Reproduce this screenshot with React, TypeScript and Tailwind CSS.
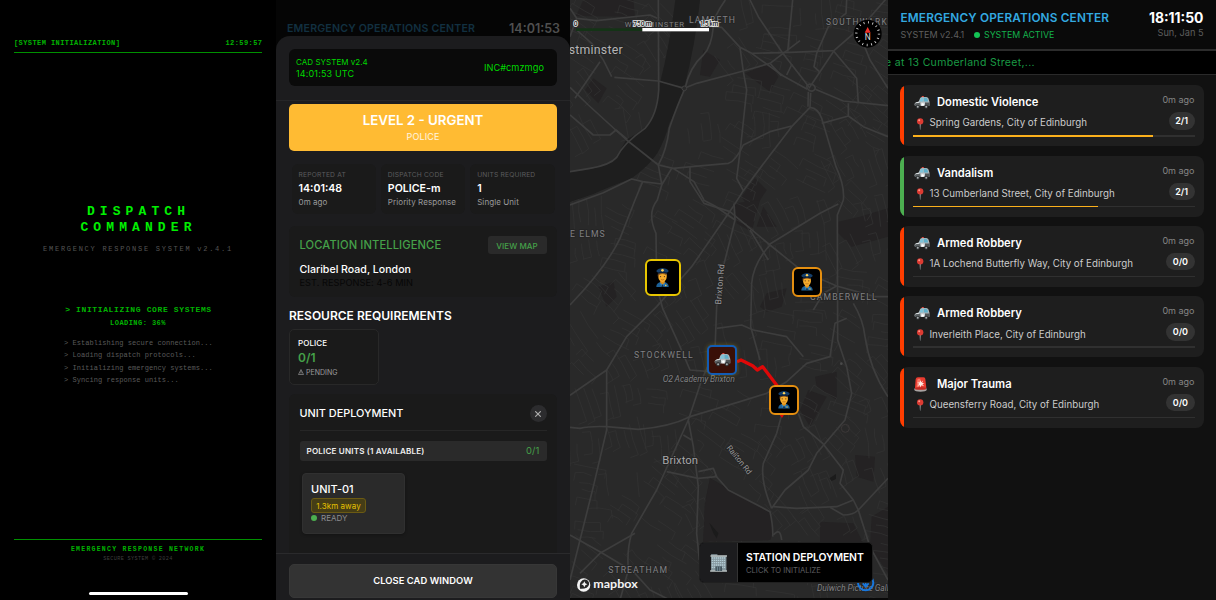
import React from "react";

const INTER = "font-['Inter',sans-serif]";
const MONO = "font-['Liberation_Mono','Courier_New',monospace]";

function PoliceCar({ className }: { className: string }) {
  return (
    <svg viewBox="0 0 48 40" className={className}>
      <rect x="23" y="0" width="7" height="4" rx="2" fill="#e0483e" />
      <path d="M14 17 L18 7 Q20 3 25 3 H37 Q42 3 44 8 L47 18 V30 H3 Q0 27 1 24 Q2 20 14 17Z" fill="#aeb6ba" />
      <path d="M16 17 L20 8 Q21 6 25 5 H28 V17Z" fill="#7fc4da" />
      <path d="M30 5 H36 Q40 6 41 10 L43 17 H30Z" fill="#5fb0ca" />
      <path d="M1 24 Q8 20 20 20 L20 31 H3 Q0 29 1 24Z" fill="#5c6163" />
      <path d="M33 20 H47 V31 H33Z" fill="#505456" />
      <path d="M2 22 Q8 18 17 18 L15 21Z" fill="#e4e8e9" />
      <path d="M19 20 H33 L31 31 H21Z" fill="#d7dcde" />
      <path d="M26 21 L28 24 L31 25 L26 30 L22 25 L25 24Z" fill="#fff" />
      <circle cx="11" cy="33" r="6" fill="#303335" />
      <circle cx="11" cy="33" r="3" fill="#a9adaf" />
      <circle cx="37" cy="33" r="6" fill="#303335" />
      <circle cx="37" cy="33" r="3" fill="#a9adaf" />
    </svg>
  );
}

function Officer({ className }: { className: string }) {
  return (
    <svg viewBox="0 0 40 58" className={className}>
      <path d="M1 58 Q1 46 14 43 H26 Q39 46 39 58Z" fill="#1d6299" />
      <path d="M13 38 H27 V45 L20 51 L13 45Z" fill="#dd911c" />
      <path d="M11 44 L20 51 L16 56Z M29 44 L20 51 L24 56Z" fill="#3b8bc6" />
      <path d="M18 51 H22 L23 58 H17Z" fill="#12324f" />
      <path d="M7 15 H33 V27 Q32 41 20 43 Q8 41 7 27Z" fill="#f5ac2c" />
      <path d="M6 16 H34 L32 21 Q20 16 8 21 L7 28 L5 24Z" fill="#73451b" />
      <circle cx="14" cy="26" r="2" fill="#57351a" />
      <circle cx="26" cy="26" r="2" fill="#57351a" />
      <path d="M15 35 Q20 38 25 35" stroke="#a55b19" strokeWidth="2" fill="none" />
      <path d="M1 9 Q4 2 20 0 Q36 2 39 9 Q38 13 33 14 H7 Q2 13 1 9Z" fill="#15406d" />
      <path d="M7 13 Q20 8 33 13 L34 18 Q20 13 6 18Z" fill="#0b223f" />
      <circle cx="20" cy="7" r="4" fill="#ffd35a" />
      <circle cx="30" cy="53" r="2.6" fill="#f6c748" />
    </svg>
  );
}

function Siren() {
  return (
    <svg viewBox="0 0 40 46" className="h-[15px] w-[13px]">
      <path d="M3 34 L5 7 Q6 1 12 1 H29 Q35 1 35 7 L38 34Z" fill="#e93b2f" />
      <path d="M8 32 L10 9 Q11 5 15 5 H20 L16 32Z" fill="#fa7565" />
      <path d="M1 35 Q20 30 39 35 V40 Q37 45 20 45 Q3 45 1 40Z" fill="#a9a3a2" />
      <path d="M3 33 Q20 29 37 33 L36 38 Q20 41 4 38Z" fill="#c4271f" />
      <path d="M20 9 L22 16 L28 11 L25 18 L32 18 L26 22 L31 28 L23 25 L20 32 L18 25 L11 27 L16 21 L10 17 L17 17Z" fill="#ffe9e2" />
    </svg>
  );
}

function Pin() {
  return (
    <svg viewBox="0 0 24 36" className="h-[12px] w-[8px]">
      <path d="M11 18 H14 L13 35 H12Z" fill="#a8b0b5" />
      <circle cx="12.5" cy="10" r="9.5" fill="#dd3b32" />
      <circle cx="9.5" cy="7" r="3" fill="#ff948a" />
    </svg>
  );
}

function BootPanel() {
  const logs = [
    "> Establishing secure connection...",
    "> Loading dispatch protocols...",
    "> Initializing emergency systems...",
    "> Syncing response units...",
  ];
  return (
    <section className={`flex h-full w-[276px] shrink-0 flex-col bg-black px-[14px] pt-[37px] whitespace-pre ${MONO}`}>
      <div className="flex h-[16px] items-start justify-between border-b border-[#009000] text-[7px] leading-[12px] font-bold tracking-[0.42px] text-[#00b400]">
        <span>[SYSTEM INITIALIZATION]</span>
        <span className="-mr-[0.4px]">12:59:57</span>
      </div>
      <h1 className="mt-[151px] pl-[1px] text-center text-[13px] leading-[15.5px] font-bold tracking-[5.1px] text-[#00f000]">
        <span className="block">DISPATCH</span>
        <span className="block">COMMANDER</span>
      </h1>
      <p className="mt-[8px] h-[12px] text-center text-[7px] leading-[12px] tracking-[1.73px] text-[#555]">EMERGENCY RESPONSE SYSTEM v2.4.1</p>
      <p className="mt-[48px] h-[14px] pl-[1px] text-center text-[8px] leading-[14px] font-bold tracking-[0.63px] text-[#00b400]">&gt; INITIALIZING CORE SYSTEMS</p>
      <p className="h-[13px] text-center text-[7px] leading-[13px] font-bold tracking-[0.45px] text-[#00b400]">LOADING: 36%</p>
      <div className="mt-[7px] h-[50px] pl-[50px] text-[7px] leading-[12.25px] tracking-[0.05px] text-[#5a5a5a]">
        {logs.map((l) => (
          <p key={l}>{l}</p>
        ))}
      </div>
      <div className="mt-[152px] border-t border-[#009000] pt-[5px] text-center">
        <p className="text-[6.5px] leading-[10px] font-bold tracking-[1.26px] text-[#00b400]">EMERGENCY RESPONSE NETWORK</p>
        <p className="text-[5.2px] leading-[8px] tracking-[0.36px] text-[#3f3f3f]">SECURE SYSTEM © 2024</p>
      </div>
      <div className="mx-auto mt-[29px] h-[3px] w-[99px] rounded-full bg-white" />
    </section>
  );
}

const facts = [
  { label: "REPORTED AT", value: "14:01:48", note: "0m ago" },
  { label: "DISPATCH CODE", value: "POLICE-m", note: "Priority Response" },
  { label: "UNITS REQUIRED", value: "1", note: "Single Unit" },
];

function CadPanel() {
  return (
    <section className={`flex h-full w-[294px] shrink-0 flex-col overflow-hidden bg-[#050505] whitespace-nowrap ${INTER}`}>
      <div className="flex h-[36px] items-end justify-between pr-[10px] pl-[11px] leading-[14px]">
        <span className="text-[10.6px] font-semibold tracking-[0.18px] text-[#123040]">EMERGENCY OPERATIONS CENTER</span>
        <span className="text-[12.5px] font-semibold text-[#505050]">14:01:53</span>
      </div>
      <div className="flex min-h-0 flex-1 flex-col rounded-t-[14px] bg-[#1c1c1e]">
        <div className="h-[65px] shrink-0 border-b border-[#262628] px-[13px] pt-[13px]">
          <div className="flex h-[37px] items-center justify-between rounded-[6px] bg-[#0a0a0a] pr-[13px] pl-[7px] text-[#00d800]">
            <div>
              <p className="text-[8px] leading-[12px] tracking-[0.04px]">CAD SYSTEM v2.4</p>
              <p className="text-[9px] leading-[12px] tracking-[0.15px]">14:01:53 UTC</p>
            </div>
            <span className="text-[9.2px] tracking-[0.06px]">INC#cmzmgo</span>
          </div>
        </div>
        <div className="flex min-h-0 flex-1 flex-col overflow-hidden px-[13px] pt-[3px]">
          <div className="h-[47px] shrink-0 rounded-[5px] bg-[#ffbb33] pt-[8px] text-center text-white">
            <p className="text-[13.3px] leading-[17px] font-semibold">LEVEL 2 - URGENT</p>
            <p className="text-[9px] leading-[16px] tracking-[0.15px] text-white/85">POLICE</p>
          </div>
          <div className="mt-[13px] grid h-[50px] shrink-0 grid-cols-3 gap-[5px] px-[2.5px]">
            {facts.map((f) => (
              <div key={f.label} className="rounded-[6px] bg-[#1a1a1a] px-[7px] pt-[6px]">
                <p className="text-[6.7px] leading-[11px] tracking-[0.18px] text-[#5c5c5e]">{f.label}</p>
                <p className="text-[10.6px] leading-[16px] font-semibold text-white">{f.value}</p>
                <p className="text-[8px] leading-[11px] tracking-[0.08px] text-[#9a9a9c]">{f.note}</p>
              </div>
            ))}
          </div>
          <div className="mt-[11.5px] h-[71px] shrink-0 rounded-[6px] bg-[#1a1a1a] px-[10.5px] pt-[11px]">
            <div className="flex h-[17px] items-center justify-between">
              <span className="pt-px text-[11.2px] font-medium tracking-[0.1px] text-[#45a049]">LOCATION INTELLIGENCE</span>
              <span className="flex h-[18px] w-[59px] items-center justify-center rounded-[3px] bg-[#2a2a2a] pt-px text-[8px] font-medium tracking-[0.06px] text-[#45a049]">VIEW MAP</span>
            </div>
            <p className="mt-[9px] text-[10.6px] leading-[14px] font-medium text-white">Claribel Road, London</p>
            <p className="text-[9.2px] leading-[11px] tracking-[0.06px] text-[#070707]">EST. RESPONSE: 4-6 MIN</p>
          </div>
          <h2 className="mt-[10px] text-[12px] leading-[18px] font-semibold text-white">RESOURCE REQUIREMENTS</h2>
          <div className="mt-[4px] h-[56px] w-[90px] shrink-0 rounded-[5px] border border-[#282828] bg-[#1a1a1a] px-[8px] pt-[6px]">
            <p className="text-[8px] leading-[14px] font-medium tracking-[0.1px] text-white">POLICE</p>
            <p className="text-[12px] leading-[16px] font-semibold text-[#45a049]">0/1</p>
            <p className="flex items-center gap-[2px] text-[7px] leading-[13px] text-[#9a9a9c]">
              <svg viewBox="0 0 12 12" className="h-[6px] w-[6px]" fill="none" stroke="#9a9a9c" strokeWidth="1.3">
                <path d="M6 1 L11 11 H1Z M6 4 V8 M6 9 V10" />
              </svg>
              PENDING
            </p>
          </div>
          <div className="mt-[9.5px] min-h-0 flex-1 overflow-hidden rounded-t-[6px] bg-[#1a1a1a] px-[10.5px]">
            <div className="flex h-[37px] items-center justify-between border-b border-[#262626] pt-[3px]">
              <span className="text-[10.9px] font-medium text-white">UNIT DEPLOYMENT</span>
              <span className="flex h-[17px] w-[17px] items-center justify-center rounded-full bg-[#2c2c2e]">
                <svg viewBox="0 0 10 10" className="h-[6px] w-[6px]" stroke="#aaa" strokeWidth="2" strokeLinecap="round">
                  <path d="M1 1 L9 9 M9 1 L1 9" />
                </svg>
              </span>
            </div>
            <div className="mt-[10px] flex h-[20px] items-center justify-between rounded-[3px] bg-[#2a2a2a] px-[7px]">
              <span className="text-[8.1px] font-semibold tracking-[0.17px] text-[#eee]">POLICE UNITS (1 AVAILABLE)</span>
              <span className="text-[9.4px] tracking-[0.1px] text-[#45a049]">0/1</span>
            </div>
            <div className="mt-[12px] ml-[2.5px] h-[61px] w-[103px] rounded-[4px] border border-[#303030] bg-[#2a2a2a] px-[8px] pt-[8px] shadow-[0_1px_3px_rgba(0,0,0,0.3)]">
              <p className="text-[11px] leading-[15px] font-medium text-white">UNIT-01</p>
              <span className="mt-[1px] flex h-[15px] w-[55px] items-center justify-center rounded-[3px] border border-[#6b5a13] bg-[#453d16] text-[8px] tracking-[0.06px] text-[#e5c100]">1.3km away</span>
              <p className="flex items-center gap-[4px] text-[8px] leading-[10px] text-[#8d8d8f]">
                <i className="h-[6px] w-[6px] rounded-full bg-[#4caf50]" />
                READY
              </p>
            </div>
          </div>
        </div>
        <div className="h-[47px] shrink-0 border-t border-[#2a2a2c] px-[13px] pt-[10px]">
          <div className="flex h-[34px] items-center justify-center rounded-[5px] border border-[#373737] bg-[#333] text-[9.4px] font-semibold tracking-[0.06px] text-white">CLOSE CAD WINDOW</div>
        </div>
      </div>
    </section>
  );
}

const majorRoads = [
  "M0 262 L55 315 L170 420 L265 495 L310 505 L372 545 L402 600",
  "M0 345 L70 405 L120 405 L138 390 L172 418",
  "M0 515 L60 505 Q120 495 140 472 Q160 430 225 385 Q262 345 266 270 L265 0",
  "M0 25 L20 55 L80 62 L240 45 L262 55",
  "M20 55 L0 110 M125 230 L100 180 L65 130 L20 90 M90 185 L15 295",
  "M133 232 L265 243 L343 265 L380 250 L520 213 L600 190 L690 122",
  "M466 0 Q430 50 430 80 Q425 140 400 165 Q360 200 345 265 Q320 320 298 385 Q290 450 265 495",
  "M425 80 L455 82 L510 142 L545 160 L660 157 L792 152 L880 75 L954 -10",
  "M510 142 L520 215 L530 270 L512 440 L500 535 L520 572",
  "M540 0 L565 50 L635 155 L720 265",
  "M668 0 L653 155 M830 0 L828 40 L775 80 L740 160 L732 200 L748 215",
  "M545 160 L640 228 L712 268 M792 152 L720 260",
  "M666 192 L650 225 M600 190 L635 228",
  "M714 268 Q705 256 718 252 Q734 252 736 265 Q728 280 714 268 M715 275 L714 320 M722 278 L720 322",
  "M736 268 L820 303 L954 317",
  "M720 322 L665 380 L585 485 L520 572 L488 622 L365 800 L260 920 L170 1010 L110 1110 L0 1186",
  "M720 322 Q745 325 755 355 L798 500 Q825 560 820 600 L802 645 L803 1020 L830 1100 L845 1180 L825 1260 L740 1360 L715 1410 L645 1470 L605 1525",
  "M665 378 L600 395 L520 435 Q495 485 475 490 L365 500 L310 505",
  "M265 495 L275 552 L218 545 L185 537 L100 578 L0 615",
  "M218 545 L195 600 L150 715 Q110 800 0 915",
  "M305 505 L275 555 L262 600 Q230 640 258 700 L260 860 L278 925 L330 1040 L360 1110 L420 1115",
  "M360 500 L360 545 L402 610 L480 635 L600 735 L695 812 L800 858 L915 890 L954 890",
  "M492 610 L495 660 L460 800 L440 920 L435 1050 L395 1140 L375 1200 L355 1260 L370 1340 L385 1460 L380 1600 L388 1680",
  "M110 1110 L110 1290 L70 1460 L30 1620 L0 1740",
  "M540 690 L595 780 M800 858 L760 880 L730 930",
  "M790 152 L860 235 L865 310 M880 130 L900 180 L954 265",
  "M755 370 L835 348 L880 380 L954 410 M835 310 L835 348",
  "M0 1282 L30 1285 Q60 1278 110 1280 L205 1288 Q300 1280 360 1250 L510 1205 L590 1180 L650 1145 L710 1090 L780 1070 L795 970 L830 955",
  "M355 1260 L260 1470 L185 1600 Q170 1650 175 1710 L150 1800",
  "M290 1415 L385 1435 L440 1430 L430 1405 L385 1415 M340 1305 L365 1320",
  "M435 1425 L475 1470 L600 1535 Q610 1580 608 1610",
  "M610 1520 L680 1525 L800 1520 L850 1500 L865 1530 L954 1435",
  "M780 1522 L820 1545 Q850 1545 865 1530 L900 1640 L954 1740",
  "M685 1240 L700 1280 L758 1330 L820 1410 L810 1450 L850 1500",
  "M605 1525 Q570 1440 580 1390 L620 1300 L635 1245",
  "M850 910 Q880 960 885 1010 Q900 1110 954 1190",
  "M0 1605 L90 1655 L190 1715 L240 1770 L300 1800 M195 1600 L90 1660 L30 1720",
  "M600 735 Q550 790 545 850 L542 980 L570 1080 M595 735 L750 640 L805 612",
  "M400 600 L435 618 L495 660 M440 985 L515 975 L550 990 L650 1010 L700 1070",
  "M610 1605 Q630 1580 635 1620",
];

const parks = [
  "M45 270 L70 235 L110 265 L85 310Z",
  "M525 220 L600 190 L625 230 L600 275Z",
  "M555 535 L590 570 L545 640 L515 590Z",
  "M18 48 L195 50 L190 0 L40 0Z",
  "M400 150 L450 180 L420 230 L390 225Z",
  "M495 610 L570 600 L545 695 L500 670Z",
  "M580 620 L620 680 L560 680Z",
  "M805 665 L870 650 L954 625 V710 L845 740 L805 700Z",
  "M590 880 L650 865 L635 920 L590 935 L570 920Z",
  "M85 860 L130 845 L140 890 L110 920Z",
  "M420 1435 L600 1540 Q615 1590 600 1620 L400 1625 L405 1510Z",
  "M750 1565 L850 1570 L880 1630 L750 1640Z",
  "M735 1130 L800 1115 L800 1200 L740 1160Z",
  "M715 1170 L770 1190 L720 1280 L690 1230Z",
  "M855 1365 L915 1370 L910 1445 L860 1430Z",
  "M905 1550 L954 1520 V1720 L900 1640Z",
];

function makeStreets(): string {
  let seed = 71;
  const rnd = () => {
    seed = (seed * 16807) % 2147483647;
    return seed / 2147483647;
  };
  const out: string[] = [];
  for (let gy = 0; gy < 16; gy++) {
    for (let gx = 0; gx < 9; gx++) {
      const cx = gx * 112 + 30 + rnd() * 40;
      const cy = gy * 116 + 30 + rnd() * 40;
      if (cy < 620 && Math.abs(cx - (345 - Math.max(0, cy - 230) * 0.6)) < 75) continue;
      if (cx < 260 && cy > 470 && cy < 600) continue;
      if (cx > 410 && cx < 600 && cy > 1450 && cy < 1620) continue;
      const a = (gx * 0.17 + gy * 0.23 + rnd() * 0.8) % 1.57;
      const ux = Math.cos(a);
      const uy = Math.sin(a);
      const p = (u: number, v: number) =>
        `${(cx + ux * u - uy * v).toFixed(0)} ${(cy + uy * u + ux * v).toFixed(0)}`;
      for (let i = -2; i <= 2; i++) {
        if (rnd() < 0.15) continue;
        const v = i * 23 + rnd() * 6;
        const s = -60 + rnd() * 50;
        const e = 10 + rnd() * 52;
        out.push(`M${p(s, v)} L${p((s + e) / 2, v + rnd() * 8 - 4)} L${p(e, v)}`);
        if (rnd() < 0.7) out.push(`M${p(e, v)} L${p(e + rnd() * 6, v + 25)}`);
        if (rnd() < 0.4) out.push(`M${p(s, v)} L${p(s, v + 25)}`);
      }
    }
  }
  return out.join(" ");
}

const streets = makeStreets();

const places = [
  { t: "WESTMINSTER", x: 164, y: 80, w: 178, s: 23, c: "#808083" },
  { t: "LAMBETH", x: 357, y: 69, w: 138, s: 26, c: "#808083" },
  { t: "SOUTHWARK", x: 768, y: 76, w: 182, s: 25, c: "#808083" },
  { t: "E ELMS", x: 0, y: 711, w: 104, s: 26, c: "#808083" },
  { t: "CAMBERWELL", x: 720, y: 899, w: 200, s: 26, c: "#808083" },
  { t: "STOCKWELL", x: 192, y: 1074, w: 176, s: 26, c: "#808083" },
  { t: "STREATHAM", x: 115, y: 1718, w: 176, s: 26, c: "#808083" },
  { t: "stminster", x: -4, y: 163, w: 162, s: 37, c: "#b4b4b6" },
  { t: "Brixton", x: 277, y: 1392, w: 107, s: 34, c: "#a6a6a8" },
];

function MapDrawing() {
  return (
    <svg viewBox="0 0 954 1800" className="h-[600px] w-[318px] font-['Roboto',sans-serif]">
      <rect width="954" height="1800" fill="#292929" />
      {parks.map((d) => (
        <path key={d} d={d} fill="#242223" />
      ))}
      <path d={streets} stroke="#333" strokeWidth="2.2" fill="none" />
      <path d={parks[10]} fill="#242223" />
      <path
        d="M316 0 H390 Q375 140 343 260 Q315 340 298 370 Q285 420 262 460 Q235 500 185 535 Q120 560 70 582 L0 606 V516 Q90 508 135 478 L170 418 Q235 385 250 345 Q266 310 270 250 Q300 130 316 0Z"
        fill="#1e1e1e"
      />
      {majorRoads.map((d) => (
        <path key={d} d={d} stroke="#3d3d3d" strokeWidth="5" fill="none" strokeLinejoin="round" />
      ))}
      <circle cx="343" cy="265" r="7" fill="#292929" stroke="#404040" strokeWidth="3" />
      <circle cx="826" cy="1285" r="12" fill="none" stroke="#3c3838" strokeWidth="3" />
      <circle cx="814" cy="1091" r="4" fill="#4a4a4a" />
      <path d="M778 1435 L798 1422 L798 1437 L785 1443Z M418 1568 L445 1600 L440 1615 L430 1600Z" fill="#1b1b1b" />
      <g stroke="#242424" strokeWidth="5" style={{ paintOrder: "stroke" }}>
        {places.map((p) => (
          <text key={p.t} x={p.x} y={p.y} textLength={p.w} fontSize={p.s} fill={p.c}>
            {p.t}
          </text>
        ))}
        <text x="278" y="1147" textLength="217" fontSize="26" fontStyle="italic" fill="#808083">O2 Academy Brixton</text>
        <text x="741" y="1772" textLength="228" fontSize="26" fontStyle="italic" fill="#808083">Dulwich Picture Galle</text>
        <text transform="translate(453 914) rotate(-85)" textLength="121" fontSize="26" fill="#99999b">Brixton Rd</text>
        <text transform="translate(469 1344) rotate(51)" textLength="104" fontSize="24" fill="#99999b">Railton Rd</text>
      </g>
      <rect x="18" y="85" width="199" height="8" fill="#143316" />
      <rect x="217" y="84" width="200" height="10" fill="#fff" />
      <g stroke="#e8e8e8" strokeWidth="5" fontSize="20" fill="#222" fontWeight="500" style={{ paintOrder: "stroke" }}>
        <text x="11" y="78">0</text>
        <text x="190" y="78" textLength="55">750 m</text>
        <text x="389" y="78" textLength="56">1.5 km</text>
      </g>
      <circle cx="893" cy="101" r="42" fill="#000" />
      <circle cx="893" cy="101" r="34" fill="none" stroke="#ddd" strokeWidth="7" strokeDasharray="2.5 10.85" />
      <path d="M893 81 L902 98 H884Z" fill="#f0322b" />
      <text x="893" y="120" textAnchor="middle" fontSize="25" fill="#ddd">N</text>
      <path d="M501 1085 L513 1080 L548 1097 L562 1110 L578 1100 L622 1158 L635 1246" stroke="#e00808" strokeWidth="10" fill="none" strokeLinejoin="round" />
      <path d="M626 1240 L645 1240 L636 1254Z" fill="#e00808" />
      <circle cx="887" cy="1748" r="23" fill="none" stroke="#1877dd" strokeWidth="6" />
      <path d="M887 1735 V1757 M878 1750 L887 1760 L896 1750" fill="none" stroke="#1877dd" strokeWidth="5" />
      <circle cx="41" cy="1755" r="20" fill="#f4f4f4" />
      <path d="M30 1766 Q28 1750 33 1745 A13 13 0 1 1 50 1763 Q43 1767 30 1766Z" fill="#292929" />
      <path d="M43 1744 L46 1750 L52 1753 L46 1756 L43 1762 L40 1756 L34 1753 L40 1750Z" fill="#f4f4f4" />
      <text x="70" y="1763" textLength="133" lengthAdjust="spacingAndGlyphs" fontSize="35" fontWeight="700" fill="#f4f4f4" className="font-['Lato',sans-serif]">mapbox</text>
      <rect y="1794" width="954" height="6" fill="#080808" />
    </svg>
  );
}

function MapPanel() {
  return (
    <section className={`relative h-full w-[318px] shrink-0 overflow-hidden ${INTER}`}>
      <MapDrawing />
      <div className="absolute top-[259px] left-[75px] flex h-[36.5px] w-[35.5px] items-center justify-center rounded-[6px] border-2 border-[#e8c600] bg-black">
        <Officer className="h-[19px] w-[13px]" />
      </div>
      <div className="absolute top-[267px] left-[222px] flex h-[30px] w-[30px] items-center justify-center rounded-[6px] border-2 border-[#e58f10] bg-black">
        <Officer className="h-[17.5px] w-[12px]" />
      </div>
      <div className="absolute top-[345px] left-[137px] flex h-[30px] w-[30px] items-center justify-center rounded-[5px] border-2 border-[#125cb4] bg-[#391008] shadow-[0_0_4px_rgba(160,140,20,0.5)]">
        <PoliceCar className="h-[13.5px] w-[17px]" />
      </div>
      <div className="absolute top-[385px] left-[199px] flex h-[30px] w-[30px] items-center justify-center rounded-[6px] border-2 border-[#e58f10] bg-black">
        <Officer className="h-[17.5px] w-[12px]" />
      </div>
      <div className="absolute top-[542px] left-[129px] flex h-[41px] w-[174px] overflow-hidden rounded-[5px] border border-[#202020] bg-black whitespace-nowrap">
        <div className="flex w-[38px] items-center justify-center border-r border-[#333] bg-[#1c1c1e]">
          <svg viewBox="0 0 52 54" className="h-[18px] w-[17.5px]">
            <path d="M3 1 H22 V5 H49 V52 H3Z" fill="#85979e" />
            <path d="M1 4 H51 V8 H1Z M0 49 H52 V53 H0Z" fill="#b4bcbc" />
            <path d="M5 12 H47 M5 19 H47 M5 26 H47 M5 33 H47 M5 40 H47" stroke="#b2ccd5" strokeWidth="4" strokeDasharray="4 2" />
            <rect x="16" y="37" width="20" height="14" fill="#43545d" />
            <path d="M22 38 V51 M29 38 V51" stroke="#8aa5b0" strokeWidth="2" />
          </svg>
        </div>
        <div className="pt-[7px] pl-[8px]">
          <p className="text-[10.4px] leading-[16px] font-semibold tracking-[-0.09px] text-white">STATION DEPLOYMENT</p>
          <p className="text-[7.6px] leading-[9px] text-[#5e5e60]">CLICK TO INITIALIZE</p>
        </div>
      </div>
    </section>
  );
}

interface Incident {
  title: string;
  place: string;
  units: string;
  fill: string;
  edge: string;
  medical?: boolean;
}

const incidents: Incident[] = [
  { title: "Domestic Violence", place: "Spring Gardens, City of Edinburgh", units: "2/1", fill: "w-[240.5px]", edge: "bg-[#ff3d00]" },
  { title: "Vandalism", place: "13 Cumberland Street, City of Edinburgh", units: "2/1", fill: "w-[185px]", edge: "bg-[#4caf50]" },
  { title: "Armed Robbery", place: "1A Lochend Butterfly Way, City of Edinburgh", units: "0/0", fill: "w-0", edge: "bg-[#ff3d00]" },
  { title: "Armed Robbery", place: "Inverleith Place, City of Edinburgh", units: "0/0", fill: "w-0", edge: "bg-[#ff3d00]" },
  { title: "Major Trauma", place: "Queensferry Road, City of Edinburgh", units: "0/0", fill: "w-0", edge: "bg-[#ff3d00]", medical: true },
];

function IncidentCard({ item }: { item: Incident }) {
  return (
    <article className="flex h-[61px] overflow-hidden rounded-[8px] bg-[#1e1e1e]">
      <div className={`w-[3.5px] shrink-0 ${item.edge}`} />
      <div className="flex-1 pt-[8px] pr-[9px] pl-[9px]">
        <div className="flex h-[42px] justify-between">
          <div>
            <div className="flex h-[19px] items-center">
              <span className="flex w-[24.5px] pl-[1px]">{item.medical ? <Siren /> : <PoliceCar className="h-[13px] w-[16px]" />}</span>
              <span className="text-[11.2px] font-semibold text-white">{item.title}</span>
            </div>
            <div className="flex h-[23px] items-center">
              <span className="flex w-[17px] pl-[3px]"><Pin /></span>
              <span className="text-[9.75px] text-[#ccc]">{item.place}</span>
            </div>
          </div>
          <div className="flex flex-col items-end">
            <span className="text-[9px] leading-[14px] text-[#858585]">0m ago</span>
            <span className="mt-[5px] flex h-[17.5px] items-center rounded-full bg-[#333] px-[6.5px] text-[9px] font-semibold text-white">{item.units}</span>
          </div>
        </div>
        <svg viewBox="0 0 282 3" preserveAspectRatio="none" className="hidden" />
        <div className="h-[1.5px] bg-[#303030]">
          <div className={`h-full bg-[#fbb01c] ${item.fill}`} />
        </div>
      </div>
    </article>
  );
}

function IncidentPanel() {
  return (
    <section className={`flex h-full w-[328px] shrink-0 flex-col bg-[#111] whitespace-nowrap ${INTER}`}>
      <header className="flex h-[51px] shrink-0 justify-between border-b-2 border-[#2c2c2c] bg-[#0a0a0a] px-[12.5px] pt-[9px]">
        <div>
          <h1 className="text-[11.8px] leading-[18px] font-semibold tracking-[0.17px] text-[#33a9e0]">EMERGENCY OPERATIONS CENTER</h1>
          <p className="flex items-center text-[9px] leading-[15px]">
            <span className="w-[73.5px] text-[#5e5e5e]">SYSTEM v2.4.1</span>
            <i className="mr-[4px] h-[6px] w-[6px] rounded-full bg-[#14c455]" />
            <span className="text-[8.8px] text-[#14b14c]">SYSTEM ACTIVE</span>
          </p>
        </div>
        <div className="text-right">
          <p className="text-[13.9px] leading-[18px] font-bold text-white">18:11:50</p>
          <p className="text-[9.2px] leading-[11px] text-[#5e5e5e]">Sun, Jan 5</p>
        </div>
      </header>
      <div className="flex h-[24px] shrink-0 items-center overflow-hidden border-b border-[#2a2a2a] bg-black">
        <span className="-ml-[3px] text-[10.5px] tracking-[0.32px] text-[#1a9a44]">e at 13 Cumberland Street,...</span>
      </div>
      <div className="flex flex-col gap-[9.35px] pt-[10.3px] pr-[12.5px] pl-[12px]">
        {incidents.map((item) => (
          <IncidentCard key={item.place} item={item} />
        ))}
      </div>
    </section>
  );
}

export default function App() {
  return (
    <main className="flex h-[600px] w-[1216px] overflow-hidden bg-black">
      <BootPanel />
      <CadPanel />
      <MapPanel />
      <IncidentPanel />
    </main>
  );
}
